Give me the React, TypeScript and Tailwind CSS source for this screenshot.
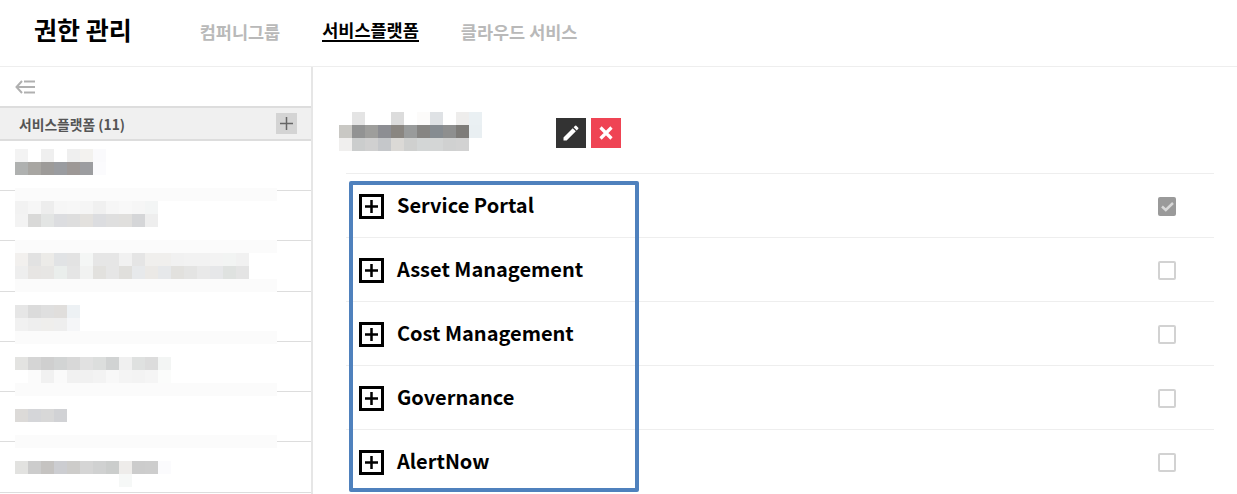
import React from 'react';
import { MdEdit } from 'react-icons/md';

type MosaicRow = string[] | 'band';

const sidebarItems: { offset: string; height: string; rows: MosaicRow[] }[] = [
  {
    offset: 'mt-[8px]',
    height: 'h-[50px]',
    rows: [
      ['#f3f3f3', '', '#efefef', '', '#efefef', '#f3f2ef', '#fafafc'],
      ['#afb1b0', '#a8a6a2', '#9d9b99', '#9a9ca0', '#9d9896', '#9c9da0', '#fbfbfd'],
    ],
  },
  {
    offset: '-mt-[3px]',
    height: 'h-[50px]',
    rows: [
      'band',
      ['#f2f2f2', '#f6f6f6', '#ededed', '#f6f6f6', '#f7f7f7', '#f5f5f5', '#f0f0f0', '#f6f6f6', '#f8f8f8', '#f6f6f6', '#f3f5f5'],
      ['#f3f3f3', '#d9d9d8', '#e3e5e4', '#dcdde0', '#dedede', '#e3e1de', '#dcdde0', '#dfdfdf', '#e0dfdd', '#d5d6d8', '#eeeeee'],
    ],
  },
  {
    offset: '-mt-[1px]',
    height: 'h-[51px]',
    rows: [
      'band',
      ['#f2f0ee', '#e2e2e2', '#ecebe8', '#e1e3e5', '#e3e3e3', '#f4f6f5', '#e6e6e6', '#e6e6e6', '#f1f1f1', '#e5e5e5', '#f0efed', '#f0efed', '#f1f1f1', '#f2f2f2', '#f2f2f2', '#f3f3f3', '#f2f4f3', '#f1f1f1'],
      ['#eeeeee', '#e7e5e3', '#e7e6e4', '#eaeeec', '#e5e5e5', '#f1f2f1', '#e2e1de', '#e6e6e6', '#e0dfdc', '#e7e9eb', '#ebe9e6', '#e6e8ea', '#e2e1de', '#e4e4e3', '#e9e9e9', '#e6e7e9', '#dfe2e0', '#e4e4e4'],
      'band',
    ],
  },
  {
    offset: 'mt-[13px]',
    height: 'h-[50px]',
    rows: [
      ['#e6e6e6', '#dbdbdb', '#dfdfdf', '#e0dedc', '#edf1f4'],
      ['#f1f1f1', '#eeeeee', '#efeeec', '#eeeeee', '#f5f6f8'],
      'band',
    ],
  },
  {
    offset: 'mt-[15px]',
    height: 'h-[50px]',
    rows: [
      ['#e3e3e1', '#d5d5d5', '#cfcfcf', '#d2d4d4', '#d8d8d8', '#e1e1e1', '#dcdedd', '#d1d3d3', '#f0f0f0', '#dfe1e0', '#dcdcdc', '#f3f5f4'],
      ['', '#fbfbfb', '#f1f1f1', '#fafafa', '#f1f1f1', '#f1f1f1', '#f3f3f3', '#f8f8f8', '#f4f4f4', '#f3f3f3', '#f5f5f5', '#fbfcfb'],
      'band',
    ],
  },
  {
    offset: 'mt-[17px]',
    height: 'h-[50px]',
    rows: [
      ['#dcdad8', '#d5d6d9', '#d8d8d8', '#d1d2d5'],
      [''],
      'band',
    ],
  },
  {
    offset: 'mt-[19px]',
    height: 'h-[51px]',
    rows: [
      ['#e2e2e0', '#cccccc', '#c5c3c1', '#cccdd1', '#cdccca', '#d5d5d5', '#d0d1d1', '#cbcdcc', '#eeecea', '#cccccc', '#cdcdcd', '#fbfbfd'],
      ['', '', '', '', '', '', '', '', '#f6f8f7'],
    ],
  },
];

const titleRows: string[][] = [
  ['', '#e4e4e4', '', '', '#dcdcdc', '', '#fcfbfa', '#dfe2e5', '', '#eeedec', '#eaf0f3'],
  ['#c9c8c4', '#929393', '#9e9e9c', '#8d8e93', '#8a8681', '#999b9b', '#868583', '#868c91', '#8e8f8f', '#7e7c79', '#e9eff2'],
  ['#f0efee', '#cbcdcd', '#d0d0d0', '#c5c7ca', '#dbd9d6', '#cfd0cf', '#d3d6d6', '#d4d6d6', '#d0d1d1', '#d2d2d2', ''],
];

const services = ['Service Portal', 'Asset Management', 'Cost Management', 'Governance', 'AlertNow'];

const Mosaic: React.FC<{ rows: MosaicRow[] }> = ({ rows }) => (
  <div className="flex flex-col">
    {rows.map((row, i) =>
      row === 'band' ? (
        <div key={i} className="h-[13px] w-[262px] bg-[#fbfbfb]" />
      ) : (
        <div key={i} className="flex h-[13px]">
          {row.map((color, j) => (
            <div key={j} className="h-[13px] w-[13px]" style={{ backgroundColor: color || 'transparent' }} />
          ))}
        </div>
      ),
    )}
  </div>
);

const Header: React.FC = () => (
  <header className="flex h-[67px] shrink-0 items-center border-b border-[#eeeeee] pl-[34px]">
    <h1 className="-mt-[7px] text-[25px] leading-none font-bold text-black">권한 관리</h1>
    <nav className="-mt-[3px] ml-[68px] flex items-center gap-[42px] text-[17.5px] leading-none font-bold">
      <span className="text-[#b9b9b9]">컴퍼니그룹</span>
      <span className="border-b-2 border-black pb-[1px] text-black">서비스플랫폼</span>
      <span className="text-[#b9b9b9]">클라우드 서비스</span>
    </nav>
  </header>
);

const Sidebar: React.FC = () => (
  <aside className="flex w-[313px] shrink-0 flex-col border-r-2 border-[#e6e6e6]">
    <div className="flex h-[39px] shrink-0 items-center pl-[15px]">
      <svg width="20" height="16" viewBox="0 0 20 16" fill="none" stroke="#b0b0b0" strokeWidth="2">
        <path d="M7 2 1.500 8 7 14" />
        <path d="M2 8h18" />
        <path d="M9 2.500h11" />
        <path d="M9 13.500h11" />
      </svg>
    </div>
    <div className="flex h-[35px] shrink-0 items-center justify-between border-y-2 border-[#dddddd] bg-[#f0f0f0] pr-[14px] pl-[19px]">
      <span className="mt-[2px] text-[13.8px] leading-none font-bold text-[#555555]">서비스플랫폼 (11)</span>
      <span className="flex h-[21px] w-[21px] items-center justify-center bg-[#d4d4d4]">
        <svg width="13" height="13" viewBox="0 0 13 13" stroke="#666666" strokeWidth="1.500">
          <path d="M6.500 0v13M0 6.500h13" />
        </svg>
      </span>
    </div>
    <ul className="flex flex-col">
      {sidebarItems.map((item, i) => (
        <li key={i} className={`flex flex-col border-b border-[#dddddd] pl-[15px] ${item.height}`}>
          <div className={item.offset}>
            <Mosaic rows={item.rows} />
          </div>
        </li>
      ))}
    </ul>
  </aside>
);

const ServiceRow: React.FC<{ name: string; checked: boolean }> = ({ name, checked }) => (
  <div className="flex h-[64px] shrink-0 items-center border-t border-[#eeeeee] pr-[38px] pl-[13px]">
    <span className="mt-[1px] flex h-[25px] w-[25px] items-center justify-center border-[3px] border-black">
      <svg width="13" height="13" viewBox="0 0 13 13" stroke="#000000" strokeWidth="2.500">
        <path d="M6.500 0v13M0 6.500h13" />
      </svg>
    </span>
    <span className="-mt-[1px] ml-[13px] text-[20px] leading-none font-bold text-black">{name}</span>
    {checked ? (
      <span className="mt-[1px] ml-auto flex h-[19px] w-[18px] items-center justify-center rounded-[2px] bg-[#9a9a9a]">
        <svg width="13" height="11" viewBox="0 0 13 11" fill="none" stroke="#d8d8d8" strokeWidth="2.500">
          <path d="M1 5.500l3.800 3.500L12 2" />
        </svg>
      </span>
    ) : (
      <span className="mt-[1px] ml-auto h-[19px] w-[18px] rounded-[2px] border-2 border-[#d2d2d2] bg-white" />
    )}
  </div>
);

export default function App() {
  return (
    <div className="flex h-[494px] w-[1237px] flex-col overflow-hidden bg-white font-['Noto_Sans_CJK_KR','Noto_Sans',sans-serif]">
      <Header />
      <div className="flex min-h-0 flex-1">
        <Sidebar />
        <main className="relative flex min-w-0 flex-1 flex-col pt-[45px] pr-[23px] pl-[33px]">
          <div className="flex h-[61px] shrink-0 items-start">
            <div className="-ml-[7px]">
              <Mosaic rows={titleRows} />
            </div>
            <div className="mt-[6px] ml-[74px] flex gap-[5px]">
              <button className="flex h-[30px] w-[30px] items-center justify-center bg-[#333333] text-white">
                <MdEdit size={20} />
              </button>
              <button className="flex h-[30px] w-[30px] items-center justify-center bg-[#ef4454]">
                <svg width="14" height="14" viewBox="0 0 14 14" stroke="#ffffff" strokeWidth="3.200">
                  <path d="M1.500 1.500l11 11M12.500 1.500l-11 11" />
                </svg>
              </button>
            </div>
          </div>
          {services.map((name, i) => (
            <ServiceRow key={name} name={name} checked={i === 0} />
          ))}
          <div className="absolute top-[114px] left-[36px] h-[311px] w-[290px] rounded-[2px] border-4 border-[#4f81bd]" />
        </main>
      </div>
    </div>
  );
}
